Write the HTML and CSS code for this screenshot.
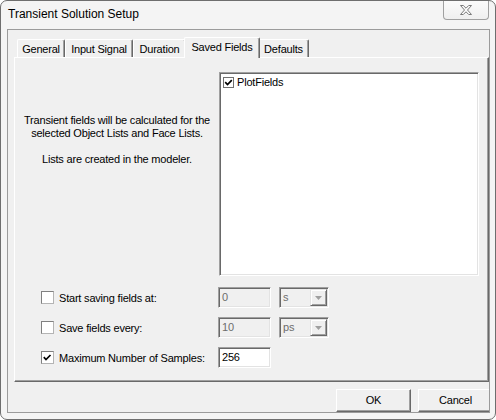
FILE: index.html
```html
<!DOCTYPE html>
<html>
<head>
<meta charset="utf-8">
<title>Transient Solution Setup</title>
<link rel="stylesheet" href="styles.css">
</head>
<body>
<div class="window">
  <div class="titlebar">
    <span class="title">Transient Solution Setup</span>
    <div class="close">
      <svg width="12" height="10" viewBox="0 0 12 10"><polygon points="0.5,0.5 3.3,0.5 6,3.2 8.7,0.5 11.5,0.5 7.5,5 11.5,9.5 8.7,9.5 6,6.8 3.3,9.5 0.5,9.5 4.5,5" fill="#fafafa" stroke="#7a7a7a" stroke-width="1" stroke-linejoin="round"/></svg>
    </div>
  </div>
  <div class="client">
    <div class="tabs">
      <div class="tab t-general">General</div>
      <div class="tab t-input">Input Signal</div>
      <div class="tab t-duration">Duration</div>
      <div class="tab t-saved selected">Saved Fields</div>
      <div class="tab t-defaults">Defaults</div>
    </div>
    <div class="panel">
      <div class="upper">
        <div class="info">
          <p>Transient fields will be calculated for the<br>selected Object Lists and Face Lists.</p>
          <p>Lists are created in the modeler.</p>
        </div>
        <div class="listbox">
          <div class="item">
            <span class="cb cb-small"><svg width="9" height="9" viewBox="0 0 9 9"><path d="M1.2 4.2 L3.5 6.5 L7.8 2.2" fill="none" stroke="#000" stroke-width="1.7"/></svg></span>
            <span>PlotFields</span>
          </div>
        </div>
      </div>
      <div class="rows">
        <div class="row">
          <label class="lbl"><span class="cb"></span><span>Start saving fields at:</span></label>
          <div class="edit disabled">0</div>
          <div class="combo disabled"><span>s</span><span class="dd"><svg width="7" height="4" viewBox="0 0 7 4"><path d="M0 0 H7 L3.5 4 Z" fill="#a0a0a0"/></svg></span></div>
        </div>
        <div class="row">
          <label class="lbl"><span class="cb"></span><span>Save fields every:</span></label>
          <div class="edit disabled">10</div>
          <div class="combo disabled"><span>ps</span><span class="dd"><svg width="7" height="4" viewBox="0 0 7 4"><path d="M0 0 H7 L3.5 4 Z" fill="#a0a0a0"/></svg></span></div>
        </div>
        <div class="row">
          <label class="lbl"><span class="cb"><svg width="11" height="11" viewBox="0 0 11 11"><path d="M1.8 5.2 L4 7.5 L8.5 3" fill="none" stroke="#000" stroke-width="1.7"/></svg></span><span>Maximum Number of Samples:</span></label>
          <div class="edit">256</div>
        </div>
      </div>
    </div>
    <div class="buttons">
      <div class="btn">OK</div>
      <div class="btn">Cancel</div>
    </div>
  </div>
</div>
</body>
</html>
```

FILE: styles.css
```css
html, body {
  margin: 0;
  padding: 0;
  background: #ffffff;
}
body {
  width: 496px;
  height: 420px;
  overflow: hidden;
  font-family: "Liberation Sans", Arial, sans-serif;
  font-size: 11px;
  letter-spacing: -0.2px;
  color: #000;
}
.window {
  box-sizing: border-box;
  width: 496px;
  height: 420px;
  border: 1px solid #6e6e6e;
  border-radius: 7px;
  background: #f4f4f4;
  display: flex;
  flex-direction: column;
}
.titlebar {
  height: 28px;
  flex: none;
  display: flex;
  justify-content: space-between;
  align-items: flex-start;
}
.title {
  font-size: 12px;
  letter-spacing: 0;
  line-height: 14px;
  margin: 6px 0 0 7px;
}
.close {
  box-sizing: border-box;
  width: 46px;
  height: 19px;
  margin-right: 6px;
  border: 1px solid #a0a0a0;
  border-top: none;
  border-radius: 0 0 4px 4px;
  background: linear-gradient(#fbfbfb, #efefef);
  display: flex;
  align-items: center;
  justify-content: center;
}
.close svg { display: block; margin-top: -1px; }
.client {
  flex: 1;
  margin: 0 5px 6px 6px;
  border: 1px solid #9b9b9b;
  background: #f0f0f0;
  overflow: hidden;
  display: flex;
  flex-direction: column;
}
.tabs {
  display: flex;
  align-items: flex-end;
  height: 20px;
  margin: 7px 0 0 9px;
  position: relative;
  z-index: 1;
}
.tab {
  box-sizing: border-box;
  height: 18px;
  background: #f0f0f0;
  border-top: 1px solid #ffffff;
  border-left: 1px solid #ffffff;
  border-right: 1px solid #696969;
  box-shadow: inset -1px 0 0 #a0a0a0;
  border-radius: 2px 2px 0 0;
  text-align: center;
  line-height: 16px;
  padding-top: 1px;
  white-space: nowrap;
}
.t-general { width: 48px; }
.t-input { width: 68px; }
.t-duration { width: 53px; }
.t-saved { width: 72px; }
.t-defaults { width: 51px; }
.tab.selected {
  width: 76px;
  height: 21px;
  margin: 0 -2px -1px -2px;
  position: relative;
  z-index: 2;
  line-height: 16px;
  padding-top: 1px;
}
.panel {
  box-sizing: border-box;
  height: 328px;
  margin-left: 6px;
  border-top: 1px solid #ffffff;
  border-left: 1px solid #ffffff;
  border-right: 1px solid #696969;
  border-bottom: 1px solid #696969;
  box-shadow: inset -1px -1px 0 #a0a0a0;
  background: #f0f0f0;
}
.upper {
  display: flex;
  margin-top: 14px;
  height: 204px;
}
.info {
  width: 204px;
  text-align: center;
  line-height: 13px;
  padding-top: 42px;
  box-sizing: border-box;
}
.info p { margin: 0 0 13px 0; }
.listbox {
  box-sizing: border-box;
  width: 260px;
  height: 204px;
  background: #ffffff;
  border-top: 1px solid #a0a0a0;
  border-left: 1px solid #a0a0a0;
  border-right: 1px solid #ffffff;
  border-bottom: 1px solid #ffffff;
  box-shadow: inset 1px 1px 0 #696969, inset -1px -1px 0 #e3e3e3;
  padding: 4px 0 0 3px;
}
.item {
  display: flex;
  align-items: center;
  gap: 3px;
  height: 11px;
  line-height: 11px;
}
.cb {
  box-sizing: border-box;
  width: 13px;
  height: 13px;
  flex: none;
  background: #ffffff;
  border: 1px solid;
  border-color: #808080 #b4b4b4 #b4b4b4 #808080;
  display: flex;
  align-items: center;
  justify-content: center;
}
.cb svg { display: block; }
.cb-small {
  width: 11px;
  height: 11px;
  border-color: #707070;
}
.rows {
  margin-top: 11px;
  padding-left: 26px;
  display: flex;
  flex-direction: column;
  gap: 9px;
}
.row {
  display: flex;
  align-items: center;
  height: 21px;
}
.lbl {
  width: 177px;
  display: flex;
  align-items: center;
  gap: 5px;
}
.edit, .combo {
  box-sizing: border-box;
  height: 21px;
  background: #ffffff;
  border-top: 1px solid #a0a0a0;
  border-left: 1px solid #a0a0a0;
  border-right: 1px solid #ffffff;
  border-bottom: 1px solid #ffffff;
  box-shadow: inset 1px 1px 0 #696969, inset -1px -1px 0 #e3e3e3;
  line-height: 19px;
  padding-left: 3px;
}
.edit { width: 53px; }
.combo {
  width: 50px;
  margin-left: 8px;
  display: flex;
  justify-content: space-between;
  padding-right: 1px;
}
.disabled {
  background: #f0f0f0;
  color: #6d6d6d;
}
.dd {
  box-sizing: border-box;
  width: 17px;
  height: 17px;
  margin-top: 1px;
  background: #f0f0f0;
  border-top: 1px solid #e3e3e3;
  border-left: 1px solid #e3e3e3;
  border-right: 1px solid #696969;
  border-bottom: 1px solid #696969;
  box-shadow: inset 1px 1px 0 #ffffff, inset -1px -1px 0 #a0a0a0;
  display: flex;
  align-items: center;
  justify-content: center;
}
.dd svg { display: block; }
.buttons {
  display: flex;
  justify-content: flex-end;
  gap: 7px;
  margin-top: 7px;
  margin-right: -4px;
}
.btn {
  box-sizing: border-box;
  width: 75px;
  height: 23px;
  flex: none;
  background: #f0f0f0;
  border-top: 1px solid #ffffff;
  border-left: 1px solid #ffffff;
  border-right: 1px solid #696969;
  border-bottom: 1px solid #696969;
  box-shadow: inset -1px -1px 0 #a0a0a0;
  text-align: center;
  line-height: 21px;
}
```
